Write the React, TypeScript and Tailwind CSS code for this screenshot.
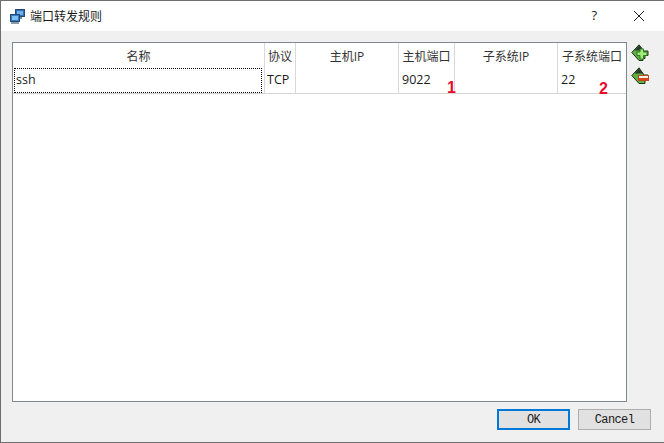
const font = "font-['Open_Sans','Noto_Sans_CJK_SC',sans-serif]";

const columns = [
  { name: "名称", value: "ssh", width: "w-[252px]", cell: "border border-dotted border-black ml-[1px] mr-[2px] pl-[1px]" },
  { name: "协议", value: "TCP", width: "w-[31px]", cell: "px-[2px]" },
  { name: "主机IP", value: "", width: "w-[103px]", cell: "px-[3px]" },
  { name: "主机端口", value: "9022", width: "w-[56px]", cell: "px-[3px]" },
  { name: "子系统IP", value: "", width: "w-[103px]", cell: "px-[3px]" },
  { name: "子系统端口", value: "22", width: "w-[68px]", cell: "px-[3px]" },
];

const AppIcon = () => (
  <svg width="17" height="17" viewBox="0 0 17 17">
    <rect x="6.5" y="1.5" width="9" height="7" fill="#2f6fb8" stroke="#27486f" />
    <rect x="8" y="3" width="6" height="4" fill="#6fb0ea" />
    <path d="M9 9h4v2H9z" fill="#7d8da0" />
    <rect x="1.5" y="6.5" width="9" height="7" fill="#2f7cc8" stroke="#27486f" />
    <rect x="3" y="8" width="6" height="4" fill="#7fc0f0" />
    <path d="M2 14h8v2H2z" fill="#8c9aaa" />
  </svg>
);

const AddIcon = () => (
  <svg width="18" height="18" viewBox="0 0 18 18">
    <path d="M8 .8 .8 8.5 8 16.5h4v-2h2v-3h3V7h-4z" fill="#5fb040" stroke="#1c361a" />
    <path d="M8 1.5 3.5 6.5h9z" fill="#26392a" />
    <path d="M9 5h3.5v3H16v3.5h-3.5V15H9v-3.5H6V8h3z" fill="#a4ea76" stroke="#2f7a2c" />
  </svg>
);

const RemoveIcon = () => (
  <svg width="18" height="18" viewBox="0 0 18 18">
    <path d="M8 .8 .8 8.5 8 16.5h6v-6h3V8h-4z" fill="#5fb040" stroke="#1c361a" />
    <path d="M8 1.5 3.5 6.5h9z" fill="#26392a" />
    <rect x="7.5" y="8.5" width="10" height="5" fill="#f6f1e4" stroke="#b9481f" />
    <rect x="8" y="11" width="9" height="2.5" fill="#dc431b" />
  </svg>
);

export default function App() {
  return (
    <div className={`${font} w-[664px] h-[443px] flex flex-col bg-[#f0f0f0] border-t border-l border-b border-[#6e6e6e] text-[12px] text-[#1a1a1a] overflow-hidden`}>
      {/* title bar */}
      <div className="h-[30px] bg-white flex items-center pl-[8px] shrink-0">
        <AppIcon />
        <span className="ml-[4px] mt-[2px] text-[12px]">端口转发规则</span>
        <span className="ml-auto mr-[36px] text-[13px] font-medium -mt-[1px]">?</span>
        <svg width="12" height="12" viewBox="0 0 12 12" className="mr-[19px] -mt-[1px]">
          <path d="M1 1l10 10M11 1L1 11" stroke="#222" strokeWidth="1" fill="none" />
        </svg>
      </div>

      <div className="flex-1 flex flex-col pl-[11px] pr-[12px] pt-[11px] pb-[12px]">
        <div className="flex gap-[4px] flex-1">
          {/* rules table */}
          <div className="relative w-[615px] h-[360px] bg-white border border-[#828790] box-border">
            <div className="flex h-[51px] border-b border-[#d6d6d6]">
              {columns.map((col, i) => (
                <div key={col.name} className={`${col.width} flex flex-col shrink-0 ${i < columns.length - 1 ? "border-r border-[#d9d9d9]" : ""}`}>
                  <div className="h-[25px] pt-[2px] flex items-center justify-center whitespace-nowrap text-[12px] text-[#333]">
                    {col.name}
                  </div>
                  <div className={`h-[25px] flex items-center text-[12.5px] ${col.cell}`}>
                    {col.value}
                  </div>
                </div>
              ))}
            </div>
            <span className="absolute left-[434px] top-[33px] text-[16px] font-bold text-[#ea0a2a] font-['Liberation_Sans']">1</span>
            <span className="absolute left-[586px] top-[34px] text-[16px] font-bold text-[#ea0a2a] font-['Liberation_Sans']">2</span>
          </div>
          <div className="flex flex-col gap-[5px] pt-[2px]">
            <AddIcon />
            <RemoveIcon />
          </div>
        </div>
        <div className="flex justify-end gap-[8px] mt-[6px] pr-[1px] font-['Liberation_Mono',monospace] text-[12px] tracking-[-0.6px]">
          <button className="w-[73px] h-[21px] bg-[#e1e1e1] border-2 border-[#0078d7]">OK</button>
          <button className="w-[73px] h-[21px] bg-[#e1e1e1] border border-[#adadad]">Cancel</button>
        </div>
      </div>
    </div>
  );
}
